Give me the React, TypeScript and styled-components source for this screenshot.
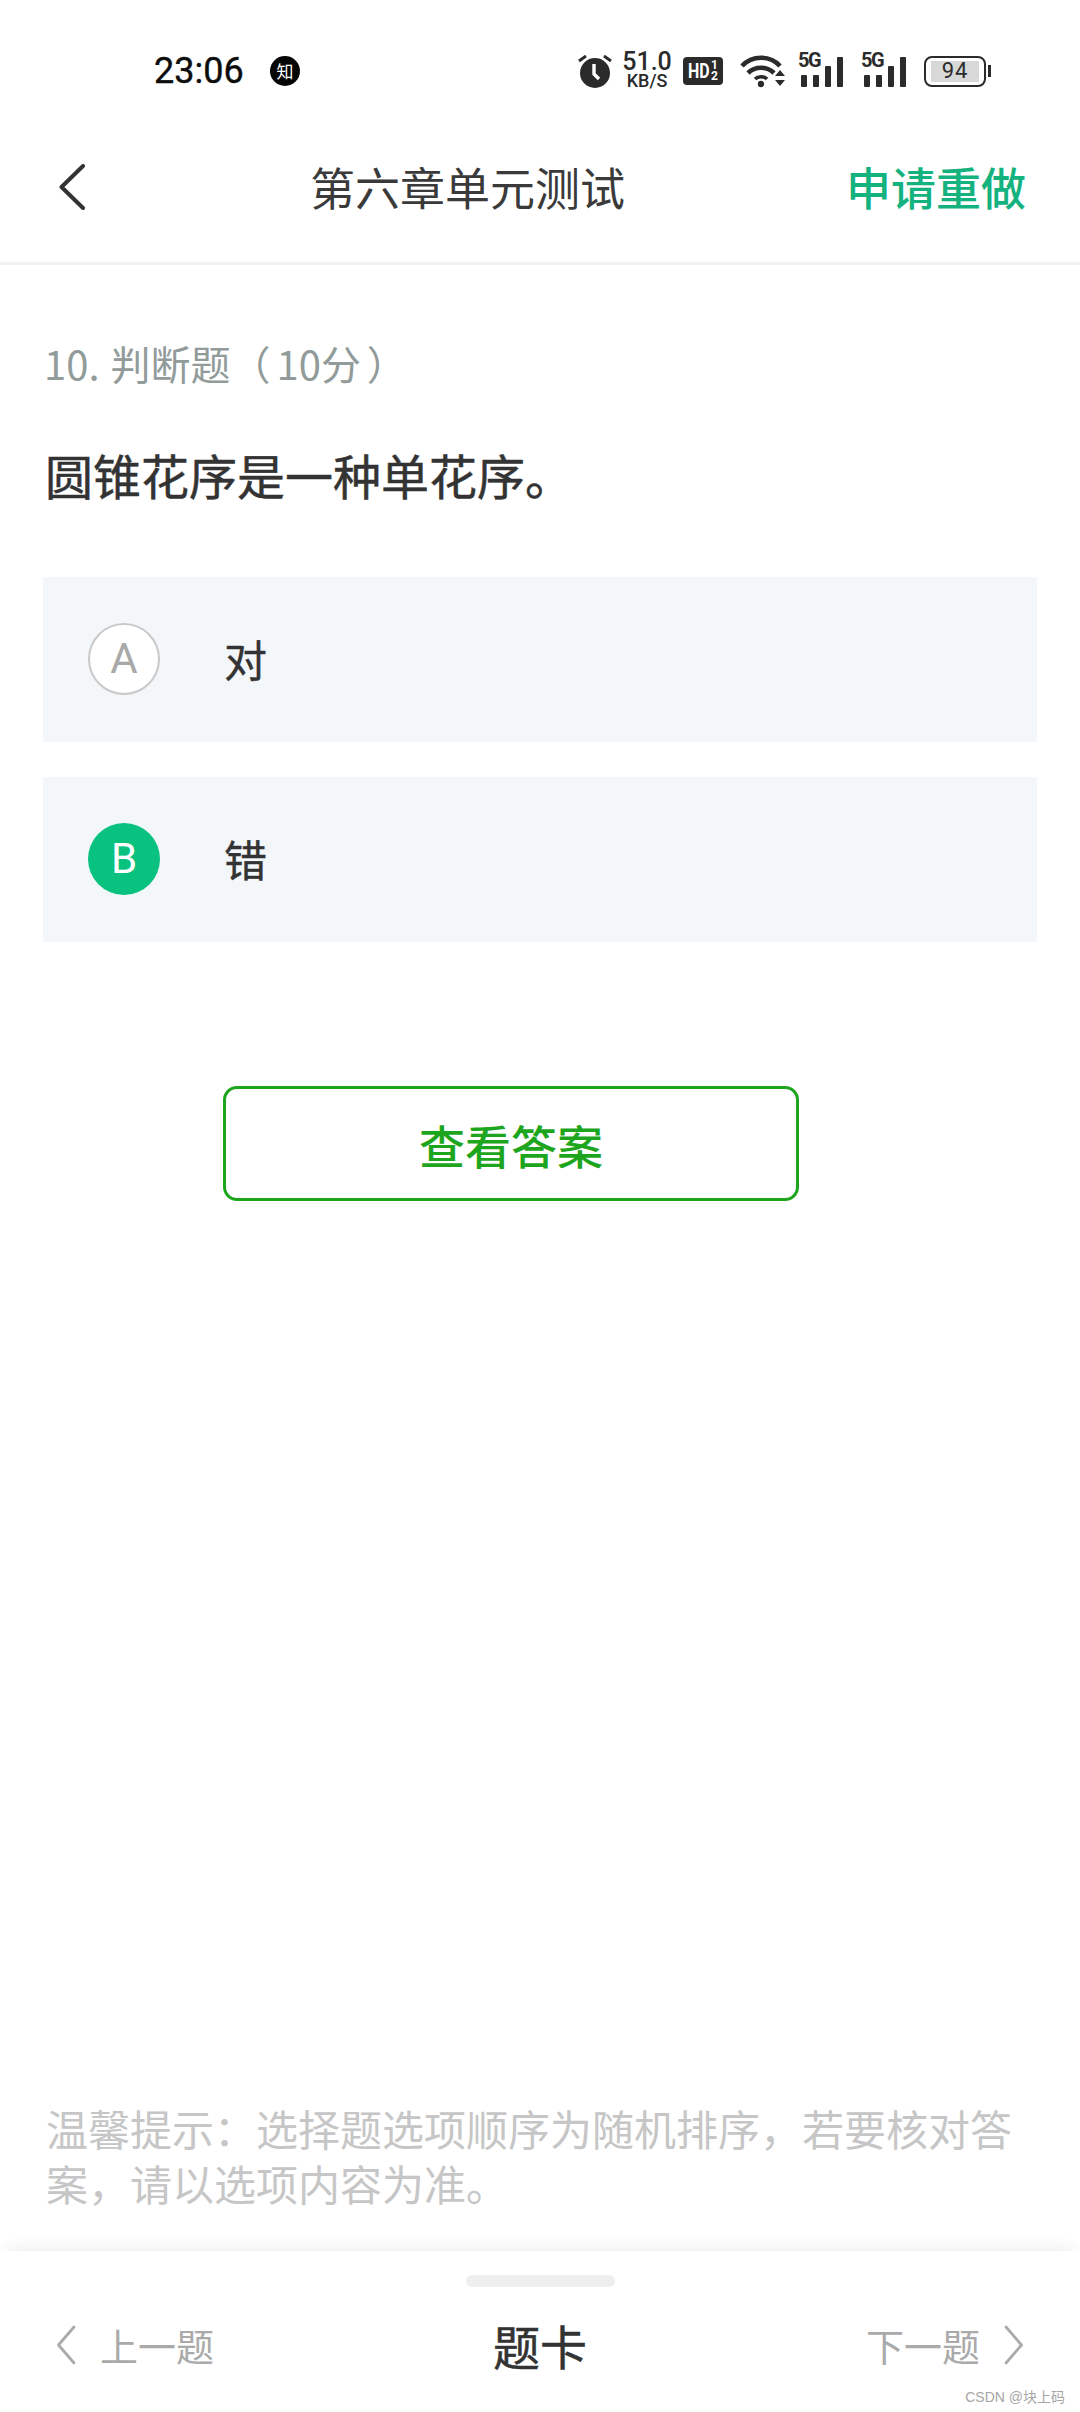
import React from 'react'
import styled, { createGlobalStyle } from 'styled-components'

const cjk = `'Noto Sans CJK SC', 'Noto Sans', sans-serif`

const GlobalStyle = createGlobalStyle`
  html, body {
    margin: 0;
    padding: 0;
    background: #fff;
  }
  * {
    box-sizing: border-box;
  }
`

const options = [
  { key: 'A', text: '对', selected: false },
  { key: 'B', text: '错', selected: true },
]

const Chevron = ({ dir, color, w, h, sw }: { dir: 'left' | 'right'; color: string; w: number; h: number; sw: number }) => (
  <svg width={w} height={h} viewBox={`0 0 ${w} ${h}`} fill="none">
    <path
      d={dir === 'left' ? `M${w - 2} 2L2.5 ${h / 2}L${w - 2} ${h - 2}` : `M2 2L${w - 2.5} ${h / 2}L2 ${h - 2}`}
      stroke={color}
      strokeWidth={sw}
      strokeLinecap="round"
      strokeLinejoin="round"
    />
  </svg>
)

const Alarm = () => (
  <svg width="34" height="34" viewBox="0 0 34 34">
    <circle cx="17" cy="19" r="15" fill="#2b2b2b" />
    <path d="M16 10v10l5 5" stroke="#fff" strokeWidth="3.4" fill="none" />
    <path d="M1 7l7-5M33 7l-7-5" stroke="#2b2b2b" strokeWidth="2.8" />
  </svg>
)

const Wifi = () => (
  <svg width="46" height="34" viewBox="0 0 46 34">
    <path d="M2 12C12 1 30 1 40 12" stroke="#2b2b2b" strokeWidth="4.6" fill="none" />
    <path d="M8 19C15 12 27 12 34 19" stroke="#2b2b2b" strokeWidth="4.6" fill="none" />
    <path d="M15 25C18 22 24 22 27 25" stroke="#2b2b2b" strokeWidth="3.6" fill="none" />
    <circle cx="21" cy="30" r="3.2" fill="#2b2b2b" />
    <path d="M35 22h10l-5-6zM35 26h10l-5 6z" fill="#2b2b2b" />
  </svg>
)

const Bars = () => (
  <svg width="46" height="30" viewBox="0 0 46 30">
    <rect x="3" y="18" width="6" height="12" rx="1" fill="#2b2b2b" />
    <rect x="15" y="18" width="6" height="12" rx="1" fill="#2b2b2b" />
    <rect x="27" y="9" width="6" height="21" rx="1" fill="#2b2b2b" />
    <rect x="39" y="0" width="6" height="30" rx="1" fill="#2b2b2b" />
  </svg>
)

const App = () => (
  <Page>
    <GlobalStyle />
    <StatusBar>
      <Clock>23:06</Clock>
      <Badge>知</Badge>
      <StatusIcons>
        <Alarm />
        <Speed>
          <SpeedValue>51.0</SpeedValue>
          <SpeedUnit>KB/S</SpeedUnit>
        </Speed>
        <Hd>
          <HdLabel>HD</HdLabel>
          <HdSub>
            <span>1</span>
            <span>2</span>
          </HdSub>
        </Hd>
        <Wifi />
        <Signal>
          <SignalLabel>5G</SignalLabel>
          <Bars />
        </Signal>
        <Signal>
          <SignalLabel>5G</SignalLabel>
          <Bars />
        </Signal>
        <Battery>
          <BatteryLevel>94</BatteryLevel>
        </Battery>
        <BatteryTip />
      </StatusIcons>
    </StatusBar>

    <Header>
      <BackButton>
        <Chevron dir="left" color="#333" w={26} h={46} sw={4} />
      </BackButton>
      <Title>第六章单元测试</Title>
      <Action>申请重做</Action>
    </Header>

    <Main>
      <Meta>
        <MetaIndex>10.</MetaIndex>判断题<MetaScore>（ 10分 ）</MetaScore>
      </Meta>
      <Question>圆锥花序是一种单花序。</Question>
      <OptionList>
        {options.map((o) => (
          <Option key={o.key}>
            <OptionKey $selected={o.selected}>{o.key}</OptionKey>
            <OptionText>{o.text}</OptionText>
          </Option>
        ))}
      </OptionList>
      <AnswerButton>查看答案</AnswerButton>
      <Spacer />
      <Tip>温馨提示：选择题选项顺序为随机排序，若要核对答案，请以选项内容为准。</Tip>
    </Main>

    <Footer>
      <Handle />
      <FooterRow>
        <NavLink>
          <Chevron dir="left" color="#aaa" w={20} h={40} sw={2.8} />
          上一题
        </NavLink>
        <CardLabel>题卡</CardLabel>
        <NavLink $end>
          下一题
          <Chevron dir="right" color="#aaa" w={20} h={40} sw={2.8} />
        </NavLink>
      </FooterRow>
      <Watermark>CSDN @块上码</Watermark>
    </Footer>
  </Page>
)

const Page = styled.div`
  width: 1080px;
  height: 2412px;
  display: flex;
  flex-direction: column;
  background: #fff;
  overflow: hidden;
  font-family: ${cjk};
`

const StatusBar = styled.div`
  height: 44px;
  margin-top: 49px;
  padding: 0 89px 0 154px;
  display: flex;
  align-items: center;
  color: #2b2b2b;
  font-family: Roboto, sans-serif;
`

const Clock = styled.span`
  font-size: 36px;
  font-weight: 400;
  -webkit-text-stroke: 0.4px #0c0c0c;
  color: #0c0c0c;
  width: 116px;
`

const Badge = styled.span`
  width: 30px;
  height: 30px;
  border-radius: 50%;
  background: #050505;
  color: #fff;
  font-family: ${cjk};
  font-size: 17px;
  line-height: 30px;
  text-align: center;
`

const StatusIcons = styled.div`
  margin-left: auto;
  display: flex;
  align-items: center;
`

const Speed = styled.div`
  margin-left: 12px;
  padding-bottom: 3px;
  width: 46px;
  display: flex;
  flex-direction: column;
  align-items: center;
`

const SpeedValue = styled.span`
  font-size: 25px;
  font-weight: 500;
  line-height: 22px;
`

const SpeedUnit = styled.span`
  font-size: 18px;
  font-weight: 500;
  line-height: 15px;
`

const Hd = styled.div`
  margin-left: 13px;
  margin-right: 17px;
  width: 40px;
  height: 28px;
  border-radius: 4px;
  background: #2b2b2b;
  color: #fff;
  display: flex;
  align-items: center;
  justify-content: center;
`

const HdLabel = styled.span`
  width: 22px;
  font-size: 21px;
  font-weight: 700;
  transform: scaleX(0.76);
  transform-origin: left center;
`

const HdSub = styled.span`
  margin-left: 1px;
  display: flex;
  flex-direction: column;
  font-size: 12px;
  font-weight: 700;
  line-height: 11px;
`

const Signal = styled.div`
  margin-left: 12px;
  margin-right: 5px;
  width: 46px;
  height: 32px;
  display: flex;
  position: relative;
  align-items: flex-end;
`

const SignalLabel = styled.span`
  position: absolute;
  top: -5px;
  left: 0;
  font-size: 20px;
  font-weight: 700;
  letter-spacing: -1.5px;
  line-height: 20px;
`

const Battery = styled.div`
  margin-left: 12px;
  width: 62px;
  height: 31px;
  border: 2.5px solid #2b2b2b;
  border-radius: 8px;
  padding: 3px 5px;
  display: flex;
`

const BatteryLevel = styled.div`
  flex: 1;
  background: #d8d8d8;
  font-size: 22px;
  line-height: 20px;
  letter-spacing: 1px;
  text-align: center;
`

const BatteryTip = styled.div`
  margin-left: 2px;
  width: 3px;
  height: 12px;
  background: #2b2b2b;
`

const Header = styled.div`
  height: 172px;
  padding: 19px 54px 0 59px;
  display: flex;
  align-items: center;
  border-bottom: 3px solid #f2f2f2;
`

const BackButton = styled.div`
  width: 251px;
  display: flex;
`

const Title = styled.div`
  font-size: 45px;
  color: #3a3a3a;
  line-height: 60px;
`

const Action = styled.div`
  margin-left: auto;
  font-size: 45px;
  font-weight: 500;
  color: #14b27e;
  line-height: 60px;
`

const Main = styled.main`
  flex: 1;
  min-height: 0;
  padding: 68px 43px 0;
  display: flex;
  flex-direction: column;
`

const Meta = styled.div`
  font-size: 40px;
  color: #919b9a;
  line-height: 60px;
  padding-left: 1px;
`

const MetaIndex = styled.span`
  margin-right: 11px;
`

const MetaScore = styled.span`
  word-spacing: -3px;
`

const Question = styled.div`
  margin-top: 51px;
  font-size: 48px;
  -webkit-text-stroke: 0.5px #333;
  color: #333;
  line-height: 60px;
  padding-left: 2px;
`

const OptionList = styled.div`
  margin-top: 73px;
  display: flex;
  flex-direction: column;
  gap: 35px;
`

const Option = styled.div`
  height: 165px;
  padding: 0 0 2px 45px;
  background: #f3f7fa;
  display: flex;
  align-items: center;
`

const OptionKey = styled.div<{ $selected: boolean }>`
  width: 72px;
  height: 72px;
  border-radius: 50%;
  display: flex;
  align-items: center;
  justify-content: center;
  font-family: Roboto, sans-serif;
  font-size: 42px;
  background: ${({ $selected }) => ($selected ? '#09c27f' : '#fff')};
  border: ${({ $selected }) => ($selected ? 'none' : '2.5px solid #c9c9c9')};
  color: ${({ $selected }) => ($selected ? '#fff' : '#a8a8a8')};
`

const OptionText = styled.div`
  margin-left: 64px;
  padding-bottom: 2px;
  font-size: 43px;
  -webkit-text-stroke: 0.4px #333;
  color: #333;
`

const AnswerButton = styled.div`
  margin: 144px 0 0 180px;
  width: 576px;
  height: 115px;
  border: 3px solid #1ea51e;
  border-radius: 14px;
  display: flex;
  align-items: center;
  justify-content: center;
  font-size: 46px;
  font-weight: 500;
  color: #1ea51e;
`

const Spacer = styled.div`
  flex: 1;
`

const Tip = styled.div`
  width: 980px;
  padding-left: 3px;
  margin-bottom: 41px;
  font-size: 42px;
  line-height: 55px;
  color: #c6c6c6;
`

const Footer = styled.footer`
  height: 161px;
  padding: 24px 56px 0;
  position: relative;
  display: flex;
  flex-direction: column;
  align-items: center;
  box-shadow: 0 -10px 14px -6px #f0f0f0;
`

const Handle = styled.div`
  width: 149px;
  height: 12px;
  border-radius: 6px;
  background: #eeeeee;
`

const FooterRow = styled.div`
  margin-top: 28px;
  width: 100%;
  height: 60px;
  display: grid;
  grid-template-columns: 1fr auto 1fr;
  align-items: center;
`

const NavLink = styled.div<{ $end?: boolean }>`
  display: flex;
  align-items: center;
  justify-content: ${({ $end }) => ($end ? 'flex-end' : 'flex-start')};
  gap: 24px;
  font-size: 38px;
  line-height: 60px;
  color: #aaaaaa;
`

const CardLabel = styled.div`
  font-size: 47px;
  -webkit-text-stroke: 0.5px #333;
  color: #333;
  line-height: 60px;
`

const Watermark = styled.div`
  position: absolute;
  right: 15px;
  bottom: 6px;
  font-family: 'Liberation Sans', ${cjk};
  font-size: 14px;
  line-height: 18px;
  color: #a6a6a6;
`

export default App
